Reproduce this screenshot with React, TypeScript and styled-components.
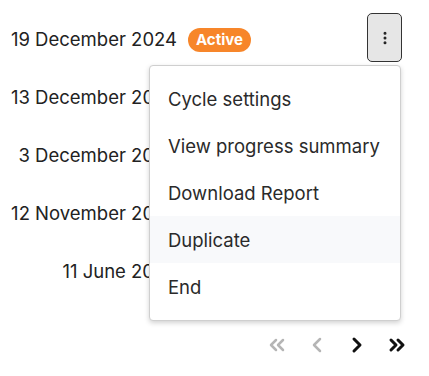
import React, { useState } from 'react';
import styled, { createGlobalStyle } from 'styled-components';
import { ChevronLeft, ChevronRight, ChevronsLeft, ChevronsRight, EllipsisVertical } from 'lucide-react';

const GlobalStyle = createGlobalStyle`
  body {
    margin: 0;
    background: #fff;
    font-family: Inter, "Noto Sans", sans-serif;
    color: #222;
  }
`;

const Page = styled.div`
  width: 429px;
  height: 376px;
  overflow: hidden;
  position: relative;
  padding-right: 27px;
  box-sizing: border-box;
`;

const Table = styled.div`
  display: grid;
  grid-template-columns: 177px 1fr 50px;
  padding-top: 10px;
`;

const DateCell = styled.div`
  height: 58px;
  display: flex;
  align-items: center;
  justify-content: flex-end;
  font-size: 18.5px;
  white-space: nowrap;
`;

const BadgeCell = styled.div`
  height: 58px;
  display: flex;
  align-items: center;
  padding-left: 11px;
  padding-top: 2px;
  box-sizing: border-box;
`;

const Badge = styled.span`
  background: #f7862a;
  color: #fff;
  font-weight: 700;
  font-size: 15px;
  line-height: 24px;
  height: 24px;
  padding: 0 8px;
  border-radius: 12px;
`;

const ActionCell = styled.div`
  height: 58px;
  position: relative;
`;

const MenuButton = styled.button`
  position: absolute;
  top: 3px;
  right: 0;
  width: 35px;
  height: 49px;
  padding: 0;
  display: flex;
  align-items: center;
  justify-content: center;
  background: #e6e6e6;
  border: 1.5px solid #333;
  border-radius: 5px;
  color: #222;
`;

const Menu = styled.ul`
  position: absolute;
  top: 55px;
  right: 1px;
  width: 252px;
  margin: 0;
  padding: 9px 0 10px;
  list-style: none;
  background: #fff;
  border: 1px solid #cfcfcf;
  border-radius: 4px;
  box-shadow: 0 2px 5px rgba(0, 0, 0, 0.18);
  z-index: 10;
  box-sizing: border-box;
`;

const MenuItem = styled.li<{ $hover?: boolean }>`
  height: 47px;
  display: flex;
  align-items: center;
  padding-left: 18px;
  font-size: 18.5px;
  color: #2a2a2a;
  background: ${(p) => (p.$hover ? '#f8f9fb' : 'transparent')};
`;

const Pager = styled.div`
  position: absolute;
  top: 333px;
  right: 20px;
  display: flex;
  align-items: center;
  gap: 16px;
`;

const PageButton = styled.button<{ $disabled?: boolean }>`
  width: 24px;
  height: 24px;
  padding: 0;
  border: none;
  background: none;
  display: flex;
  align-items: center;
  justify-content: center;
  color: ${(p) => (p.$disabled ? '#b5b5b5' : '#111')};
`;

const cycles = [
  { date: '19 December 2024', active: true },
  { date: '13 December 2024' },
  { date: '3 December 2024' },
  { date: '12 November 2024' },
  { date: '11 June 2024' },
];

const menuItems = ['Cycle settings', 'View progress summary', 'Download Report', 'Duplicate', 'End'];

export default function App() {
  const [open] = useState(true);

  return (
    <Page>
      <GlobalStyle />
      <Table>
        {cycles.map((c, i) => (
          <React.Fragment key={c.date}>
            <DateCell>{c.date}</DateCell>
            <BadgeCell>{c.active && <Badge>Active</Badge>}</BadgeCell>
            <ActionCell>
              {i === 0 && (
                <>
                  <MenuButton aria-label="More actions">
                    <EllipsisVertical size={16} strokeWidth={2.5} />
                  </MenuButton>
                  {open && (
                    <Menu>
                      {menuItems.map((m) => (
                        <MenuItem key={m} $hover={m === 'Duplicate'}>
                          {m}
                        </MenuItem>
                      ))}
                    </Menu>
                  )}
                </>
              )}
            </ActionCell>
          </React.Fragment>
        ))}
      </Table>
      <Pager>
        <PageButton $disabled>
          <ChevronsLeft size={24} strokeWidth={2.5} />
        </PageButton>
        <PageButton $disabled>
          <ChevronLeft size={24} strokeWidth={2.5} />
        </PageButton>
        <PageButton>
          <ChevronRight size={24} strokeWidth={3} />
        </PageButton>
        <PageButton>
          <ChevronsRight size={24} strokeWidth={3} />
        </PageButton>
      </Pager>
    </Page>
  );
}
